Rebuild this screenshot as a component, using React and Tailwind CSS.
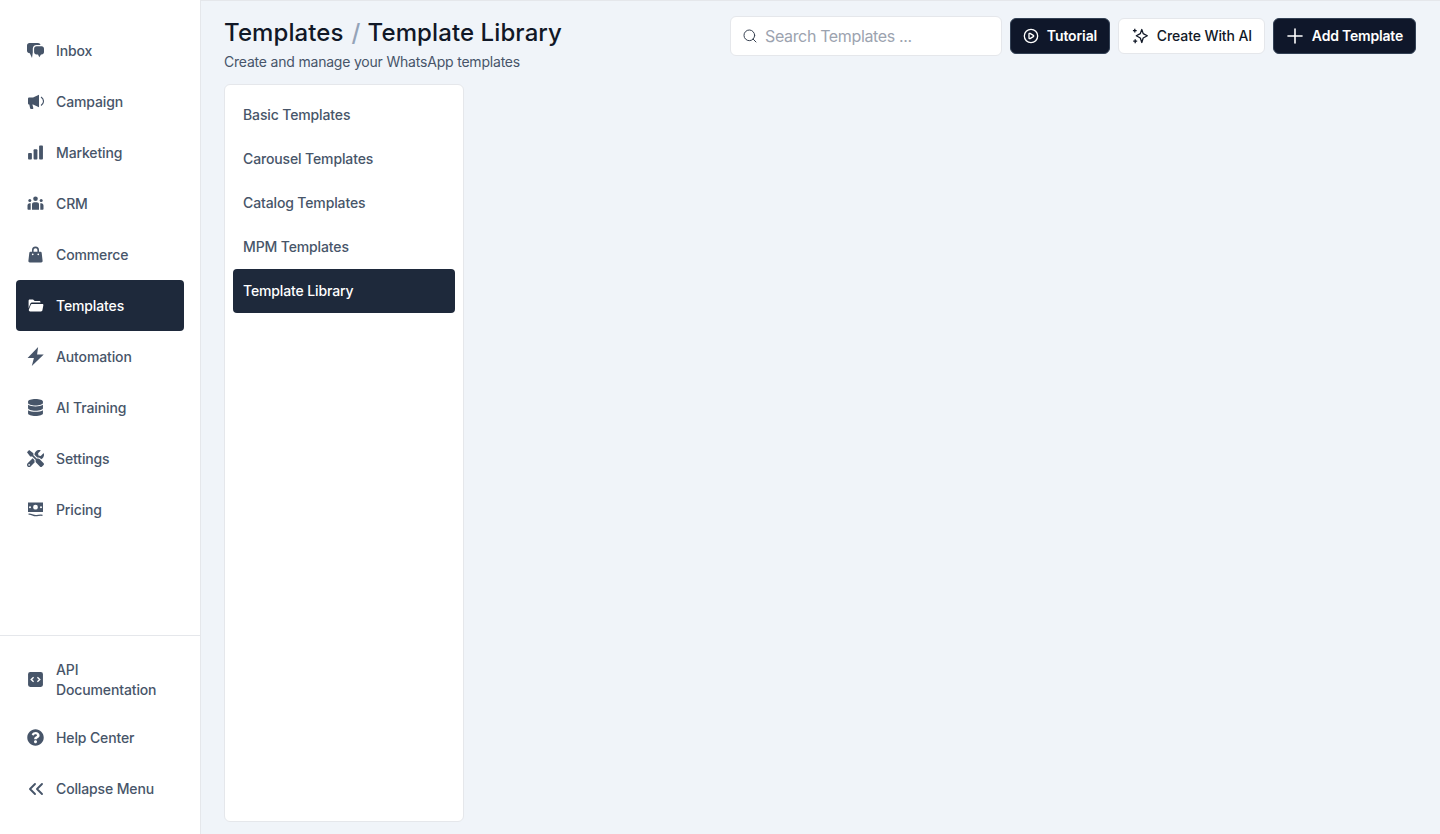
import React from "react";
import { FaDatabase, FaTools, FaQuestionCircle } from "react-icons/fa";
import { Search, CirclePlay, Plus, ChevronsLeft } from "lucide-react";

const Comments = ({ className }) => (
  <svg viewBox="0 0 17 16" className={className} fill="currentColor">
    <path d="M2.500 .5h8.500C12.300 .5 13.300 1.300 13.500 2.500H9.500C7.300 2.500 5.800 4 5.800 6.200V10L5 15.500 2.800 10.800C1.200 10.800 0 9.800 0 8.300V3C0 1.500 1 .5 2.500 .5Z" />
    <path d="M9.500 3.800h5.200C16 3.800 17 4.800 17 6.200v3.300c0 1.400-1 2.400-2.300 2.400h-.7L12.300 14.800 11 11.900H9.500c-1.400 0-2.400-1-2.400-2.400V6.200c0-1.400 1-2.400 2.400-2.400Z" />
  </svg>
);
const Horn = ({ className }) => (
  <svg viewBox="0 0 17 16" className={className} fill="currentColor">
    <path d="M1 5.300C1 4.500 1.600 4 2.300 4H6l6-2.700v12.400L6 11H5.400l.9 3.500c.1.500-.2 1-.8 1H4c-.4 0-.8-.3-.9-.7L2.300 11C1.500 11 1 10.500 1 9.700Z" />
    <path d="M14 3.500c1.600 1 2.500 2.500 2.500 4.200s-.9 3.300-2.500 4.300" fill="none" stroke="currentColor" strokeWidth="1.100" />
  </svg>
);
const Bars = ({ className }) => (
  <svg viewBox="0 0 16 16" className={className} fill="currentColor">
    <rect x="1" y="8.500" width="3.600" height="6" rx="0.8" />
    <rect x="6.200" y="5" width="3.600" height="9.500" rx="0.8" />
    <rect x="11.400" y="1.500" width="3.600" height="13" rx="0.8" />
  </svg>
);
const Crowd = ({ className }) => (
  <svg viewBox="0 0 17 16" className={className} fill="currentColor">
    <circle cx="8.500" cy="3.300" r="2.300" />
    <circle cx="2.800" cy="5" r="1.500" />
    <circle cx="14.200" cy="5" r="1.500" />
    <path d="M5 9c0-1.300 1-2.200 2.200-2.200h2.600c1.200 0 2.200.9 2.200 2.200v5.300H5Z" />
    <path d="M.5 10c0-1.300.9-2.300 2.100-2.300h1.100v6.600H1.200a.7.7 0 0 1-.7-.7ZM16.500 10c0-1.300-.9-2.300-2.100-2.300h-1.100v6.600h2.500a.7.7 0 0 0 .7-.7Z" />
  </svg>
);
const Bag = ({ className }) => (
  <svg viewBox="0 0 16 16" className={className} fill="currentColor">
    <path fillRule="evenodd" d="M8 .5a3.300 3.300 0 0 1 3.300 3.300V5.500h1.500c.5 0 .9.300 1 .8L14.700 14c.1.800-.5 1.500-1.300 1.500H2.600c-.8 0-1.400-.7-1.300-1.500l.9-7.700c.1-.5.500-.8 1-.8h1.500V3.800A3.300 3.300 0 0 1 8 .5Zm0 1.500a1.800 1.800 0 0 0-1.800 1.800V5.500h3.600V3.800A1.800 1.800 0 0 0 8 2ZM5.400 7a.8.8 0 1 0 0 1.600.8.800 0 0 0 0-1.600Zm5.200 0a.8.8 0 1 0 0 1.600.8.800 0 0 0 0-1.600Z" />
  </svg>
);
const Folder = ({ className }) => (
  <svg viewBox="0 0 16 16" className={className} fill="currentColor">
    <path d="M1.500 10.500V3.500c0-.7.500-1.200 1.200-1.200h3l1.500 1.500h4.300c.7 0 1.200.5 1.200 1.200v.2H5c-1 0-1.700.5-2 1.400Z" />
    <path d="M5 6.700h9.500c.6 0 1 .5.900 1.100l-.9 4.700c-.1.700-.6 1.100-1.300 1.100H3c-.9 0-1.500-.7-1.300-1.500L3.300 7.900C3.500 7.200 4.200 6.700 5 6.700Z" />
  </svg>
);
const Bolt = () => (
  <svg viewBox="0 0 16 18" className="h-[19px] w-[17px] shrink-0" fill="currentColor">
    <path d="M10.500 0 .5 10.500h6L4.500 18 15.800 7h-6.300Z" />
  </svg>
);
const Money = ({ className }) => (
  <svg viewBox="0 0 17 16" className={className}>
    <path fillRule="evenodd" fill="currentColor" d="M1 1h15v9.500H1ZM8.500 3.300a2.400 2.400 0 1 0 0 4.800 2.400 2.400 0 0 0 0-4.800ZM3 4.700a1 1 0 1 0 0 2 1 1 0 0 0 0-2ZM14 4.700a1 1 0 1 0 0 2 1 1 0 0 0 0-2Z" />
    <path d="M1.500 12.800c2.500-1 4.500 1.600 7.500 1.400 2.500-.2 4-.8 6.500-.4" fill="none" stroke="currentColor" strokeWidth="1.200" />
  </svg>
);
const CodeSquare = ({ className }) => (
  <svg viewBox="0 0 16 16" className={className}>
    <rect x="1" y="1" width="14" height="14" rx="2" fill="currentColor" />
    <path d="M6.200 5.900 4 8l2.200 2.100M9.800 5.900 12 8l-2.200 2.100" fill="none" stroke="#fff" strokeWidth="1.300" />
  </svg>
);
const Spark = ({ className }) => (
  <svg viewBox="0 0 16 16" className={className} fill="none" stroke="currentColor" strokeWidth="1.300">
    <path d="M9.800 1.500 11.200 5.600 15.300 7.800 11.200 10 9.800 14.500 8.300 10 4.300 7.800 8.300 5.600Z" strokeLinejoin="round" />
    <path d="M2.800 .8v3.800M.9 2.700h3.800M3.200 11.200v4M1.200 13.200h4" />
  </svg>
);
const Chevrons = () => <ChevronsLeft className="-mx-[3.5px] h-[24px] w-[24px] shrink-0" strokeWidth={1.9} />;

const nav = [
  ["Inbox", Comments],
  ["Campaign", Horn],
  ["Marketing", Bars],
  ["CRM", Crowd],
  ["Commerce", Bag],
  ["Templates", Folder, true],
  ["Automation", Bolt],
  ["AI Training", FaDatabase],
  ["Settings", FaTools],
  ["Pricing", Money],
];

function NavItem({ label, Icon, active }) {
  return (
    <div className={`flex min-h-[51px] w-[168px] items-center gap-[12px] rounded-[4px] pl-[11px] text-sm font-medium tracking-[-0.13px] ${active ? "bg-[#1e293b] text-white" : "text-[#475569]"}`}>
      <Icon className="h-[17px] w-[17px] shrink-0" />
      <span className="leading-[20px]">{label}</span>
    </div>
  );
}

const tabs = ["Basic Templates", "Carousel Templates", "Catalog Templates", "MPM Templates", "Template Library"];

export default function App() {
  return (
    <div className="flex h-[834px] w-[1440px] overflow-hidden bg-[#f0f4f9] font-['Inter',sans-serif]">
      <aside className="flex h-full w-[201px] shrink-0 flex-col justify-between border-r border-[#e5e7eb] bg-white">
        <nav className="flex flex-col px-4 pt-[25px]">
          {nav.map(([label, Icon, active]) => (
            <NavItem key={label} label={label} Icon={Icon} active={active} />
          ))}
        </nav>
        <div className="flex flex-col border-t border-[#e5e7eb] px-4 pb-[20px] pt-[11px]">
          <div className="flex h-[65px] w-[168px] items-center gap-[12px] pl-[11px] text-sm font-medium tracking-[-0.13px] text-[#475569]">
            <CodeSquare className="h-[17px] w-[17px] shrink-0" />
            <span className="leading-[20px]">API<br />Documentation</span>
          </div>
          <NavItem label="Help Center" Icon={FaQuestionCircle} />
          <NavItem label="Collapse Menu" Icon={Chevrons} />
        </div>
      </aside>
      <main className="flex min-w-0 flex-1 flex-col border-t border-[#e5e7eb] pl-[23px] pr-[24px]">
        <header className="flex h-[83px] shrink-0 items-start justify-between">
          <div className="pt-[16px]">
            <h1 className="flex items-center text-2xl leading-[32px] font-medium tracking-[0.1px] text-[#111827]">
              Templates<span className="ml-[8px] mr-[7px] text-[#94a3b8]">/</span>Template Library
            </h1>
            <p className="mt-[3px] text-sm leading-[20px] tracking-[-0.2px] text-[#475569]">Create and manage your WhatsApp templates</p>
          </div>
          <div className="flex items-center gap-2 pt-[15px]">
            <div className="flex h-[40px] w-[272px] items-center gap-[7px] rounded-[6px] border border-[#e5e7eb] bg-white pl-[11px]">
              <Search className="h-[16px] w-[16px] text-[#374151]" strokeWidth={1.5} />
              <span className="text-base tracking-[-0.35px] text-[#9ca3af]">Search Templates ...</span>
            </div>
            <button className="flex h-[36px] w-[100px] items-center justify-center gap-[8px] rounded-[6px] border border-[#334155] bg-[#0f172a] text-sm font-semibold tracking-[-0.1px] text-white">
              <CirclePlay className="h-[16px] w-[16px]" strokeWidth={2} />Tutorial
            </button>
            <button className="flex h-[36px] w-[147px] items-center justify-end gap-[9px] rounded-[6px] border border-[#e5e7eb] bg-white pr-[12px] text-sm font-medium tracking-[-0.1px] text-[#111827]">
              <Spark className="h-[16px] w-[16px]" />Create With AI
            </button>
            <button className="flex h-[36px] w-[143px] items-center justify-end gap-[5px] rounded-[6px] border border-[#334155] bg-[#0f172a] pr-[12px] text-sm font-semibold tracking-[-0.2px] text-white">
              <Plus className="h-[24px] w-[24px]" strokeWidth={1.6} />Add Template
            </button>
          </div>
        </header>
        <section className="flex h-[738px] w-[240px] flex-col rounded-[6px] border border-[#e5e7eb] bg-white p-2">
          {tabs.map((t) => (
            <div key={t} className={`flex h-[44px] shrink-0 items-center rounded-[4px] pl-[10px] text-sm font-medium tracking-[-0.13px] ${t === "Template Library" ? "bg-[#1e293b] text-white" : "text-[#475569]"}`}>{t}</div>
          ))}
        </section>
      </main>
    </div>
  );
}
